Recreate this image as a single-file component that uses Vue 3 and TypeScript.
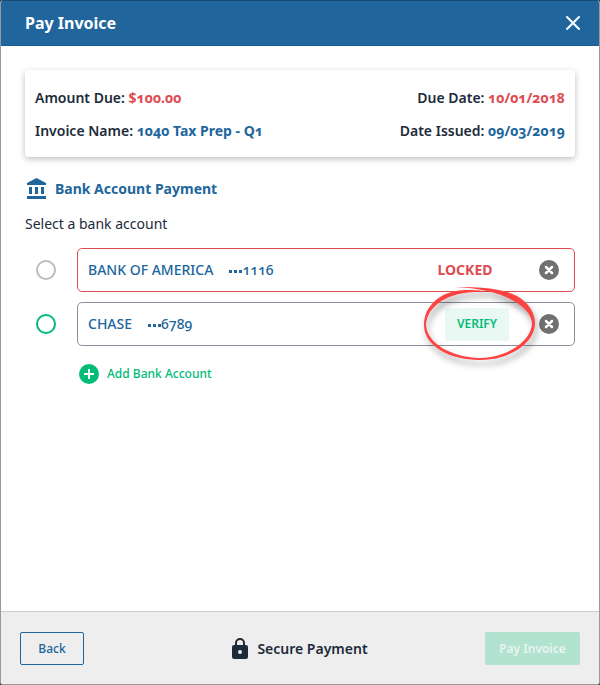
<script setup lang="ts">
import { ref } from 'vue'

interface Account {
  id: number
  name: string
  last4: string
  locked: boolean
}

const accounts = ref<Account[]>([
  { id: 1, name: 'BANK OF AMERICA', last4: '1116', locked: true },
  { id: 2, name: 'CHASE', last4: '6789', locked: false },
])
const selected = ref<number | null>(null)

function removeAccount(id: number) {
  accounts.value = accounts.value.filter((a) => a.id !== id)
}
</script>

<template>
  <section class="dialog" role="dialog" aria-labelledby="dialog-title">
    <header class="head">
      <h1 id="dialog-title">Pay Invoice</h1>
      <button type="button" class="icon-button" aria-label="Close">
        <svg width="16" height="16" viewBox="0 0 16 16">
          <path d="M2 2L14 14M14 2L2 14" stroke="#fff" stroke-width="2" stroke-linecap="round" />
        </svg>
      </button>
    </header>

    <main class="body">
      <div class="summary">
        <p>Amount Due: <b class="due">$100.00</b></p>
        <p>Due Date: <b class="due">10/01/2018</b></p>
        <p>Invoice Name: <b>1040 Tax Prep - Q1</b></p>
        <p>Date Issued: <b>09/03/2019</b></p>
      </div>

      <h2>
        <svg width="24" height="24" viewBox="0 0 24 24" fill="currentColor">
          <path d="M4 10v7h3v-7H4zm6 0v7h3v-7h-3zM2 22h19v-3H2v3zm14-12v7h3v-7h-3zm-4.500-9L2 6v2h19V6l-9.500-5z" />
        </svg>
        Bank Account Payment
      </h2>
      <p class="hint">Select a bank account</p>

      <ul class="accounts">
        <li v-for="a in accounts" :key="a.id" :class="{ locked: a.locked }">
          <input
            :id="`account-${a.id}`"
            v-model="selected"
            type="radio"
            name="account"
            :value="a.id"
            :disabled="a.locked"
          />
          <div class="card">
            <label :for="`account-${a.id}`">
              <span>{{ a.name }}</span>
              <span class="number"><span class="dots"><i></i><i></i><i></i></span>{{ a.last4 }}</span>
            </label>
            <div class="status">
              <strong v-if="a.locked">LOCKED</strong>
              <div v-else class="marked">
                <button type="button" class="verify">VERIFY</button>
                <svg class="ring" width="120" height="84" viewBox="0 0 120 84">
                  <path
                    fill="#ff4343"
                    d="M35 4C60 4 82 5 97 13C109 20 115 30 115 41C114 61 89 77 60 77C28 77 4 62 4 42C4 22 22 7 46 7C54 7 60 7 66 9C30 7 7 22 6 42C7 60 30 74 60 75C87 75 111 58 112 41C112 31 103 23 92 17C78 9 58 5 35 4Z"
                  />
                </svg>
              </div>
            </div>
            <button type="button" class="icon-button" :aria-label="`Remove ${a.name}`" @click="removeAccount(a.id)">
              <svg width="20" height="20" viewBox="0 0 20 20">
                <circle cx="10" cy="10" r="10" fill="#707070" />
                <path d="M7 7L13 13M13 7L7 13" stroke="#fff" stroke-width="2.500" stroke-linecap="round" />
              </svg>
            </button>
          </div>
        </li>
      </ul>

      <button type="button" class="add">
        <svg width="20" height="20" viewBox="0 0 20 20">
          <circle cx="10" cy="10" r="10" fill="#00bc77" />
          <path d="M10 5V15M5 10H15" stroke="#fff" stroke-width="2" />
        </svg>
        Add Bank Account
      </button>
    </main>

    <footer class="foot">
      <button type="button" class="back">Back</button>
      <p class="secure">
        <svg width="16" height="21" viewBox="0 0 16 21" fill="#1c2b39">
          <path
            fill-rule="evenodd"
            d="M14 7h-1V5A5 5 0 0 0 3 5v2H2a2 2 0 0 0-2 2v10a2 2 0 0 0 2 2h12a2 2 0 0 0 2-2V9a2 2 0 0 0-2-2zM5 5a3 3 0 0 1 6 0v2H5V5zm3 11a2 2 0 1 1 0-4 2 2 0 0 1 0 4z"
          />
        </svg>
        Secure Payment
      </p>
      <button type="button" class="pay" disabled>Pay Invoice</button>
    </footer>
  </section>
</template>

<style>
body {
  margin: 0;
  background: #1c2b39;
}
</style>

<style scoped>
.dialog {
  box-sizing: border-box;
  min-height: 100vh;
  display: flex;
  flex-direction: column;
  border: 1px solid #999;
  border-top: 0;
  border-radius: 3px;
  overflow: hidden;
  background: #fff;
  color: #1c2b39;
  font-family: 'Noto Sans', 'Open Sans', sans-serif;
  font-size: 14px;
  line-height: 20px;
  font-variant-numeric: oldstyle-nums;
}
h1,
h2,
p,
ul {
  margin: 0;
  padding: 0;
}
button {
  font: inherit;
  border: 0;
  padding: 0;
  background: none;
  cursor: pointer;
}
svg {
  display: block;
  flex: none;
}
.head {
  display: flex;
  align-items: center;
  justify-content: space-between;
  height: 44px;
  margin: 0 -1px;
  padding: 0 18px 0 24px;
  background: #20669c;
  border: 1px solid #174a72;
  border-bottom-color: #185a8e;
}
.head h1 {
  color: #fff;
  font-size: 16px;
  font-weight: 700;
}
.icon-button {
  display: flex;
}
.body {
  flex: 1;
  padding: 24px;
}
.summary {
  display: grid;
  grid-template-columns: 1fr auto;
  row-gap: 13px;
  padding: 18px 10px 16px;
  border-radius: 3px;
  box-shadow: 0 2px 6px rgba(0, 0, 0, 0.25);
  font-weight: 600;
}
.summary p:nth-child(even) {
  text-align: right;
}
.summary b {
  color: #20669c;
  font-weight: 700;
}
.summary b.due {
  color: #e04b52;
}
h2 {
  display: flex;
  align-items: center;
  gap: 6px;
  margin-top: 20px;
  color: #20669c;
  font-size: 14px;
  font-weight: 700;
}
.hint {
  margin-top: 13px;
}
.accounts {
  display: grid;
  gap: 10px;
  margin-top: 14px;
  list-style: none;
}
.accounts li {
  display: flex;
  align-items: center;
  gap: 21px;
  padding-left: 11px;
}
.accounts input {
  appearance: none;
  box-sizing: border-box;
  width: 20px;
  height: 20px;
  margin: 0;
  border: 2px solid #00bc77;
  border-radius: 50%;
  background: #fff;
}
.accounts input:checked {
  background: radial-gradient(#00bc77 5px, #fff 6px);
}
.accounts .locked input {
  border-color: #bbb;
}
.card {
  box-sizing: border-box;
  flex: 1;
  display: flex;
  align-items: center;
  height: 44px;
  padding: 0 15px 0 10px;
  border: 1px solid #8b8f9b;
  border-radius: 5px;
}
.locked .card {
  border-color: #e04b52;
}
.card label {
  flex: 1;
  display: flex;
  gap: 16px;
  color: #20669c;
  font-weight: 500;
}
.number {
  display: flex;
  align-items: center;
}
.dots {
  display: flex;
  gap: 2px;
  padding-top: 3px;
}
.dots i {
  width: 3px;
  height: 3px;
  background: #20669c;
}
.status {
  display: flex;
  justify-content: center;
  width: 72px;
  margin-right: 26px;
}
.locked .status {
  width: 96px;
}
.status strong {
  color: #e04b52;
  font-weight: 700;
}
.marked {
  position: relative;
}
.verify {
  width: 64px;
  height: 33px;
  border-radius: 2px;
  background: #eaf8f3;
  color: #00bc77;
  font-size: 12px;
  font-weight: 600;
}
.ring {
  position: absolute;
  top: -25px;
  left: -25px;
  overflow: visible;
  pointer-events: none;
  filter: drop-shadow(2px 5px 3px rgba(0, 0, 0, 0.4));
}
.add {
  display: flex;
  align-items: center;
  gap: 8px;
  margin: 18px 0 0 54px;
  color: #00bc77;
  font-size: 12px;
  font-weight: 500;
}
.foot {
  display: grid;
  grid-template-columns: 1fr auto 1fr;
  align-items: center;
  padding: 20px 19px 19px;
  border-top: 1px solid #ccc;
  background: #eee;
}
.secure {
  display: flex;
  align-items: center;
  gap: 9px;
  font-weight: 600;
}
.back,
.pay {
  height: 33px;
  border-radius: 2px;
  font-size: 12px;
}
.back {
  width: 64px;
  border: 1px solid #20669c;
  color: #20669c;
  font-weight: 500;
}
.pay {
  justify-self: end;
  width: 95px;
  background: #b2e2d0;
  color: #e9f5f0;
  font-weight: 600;
}
</style>
